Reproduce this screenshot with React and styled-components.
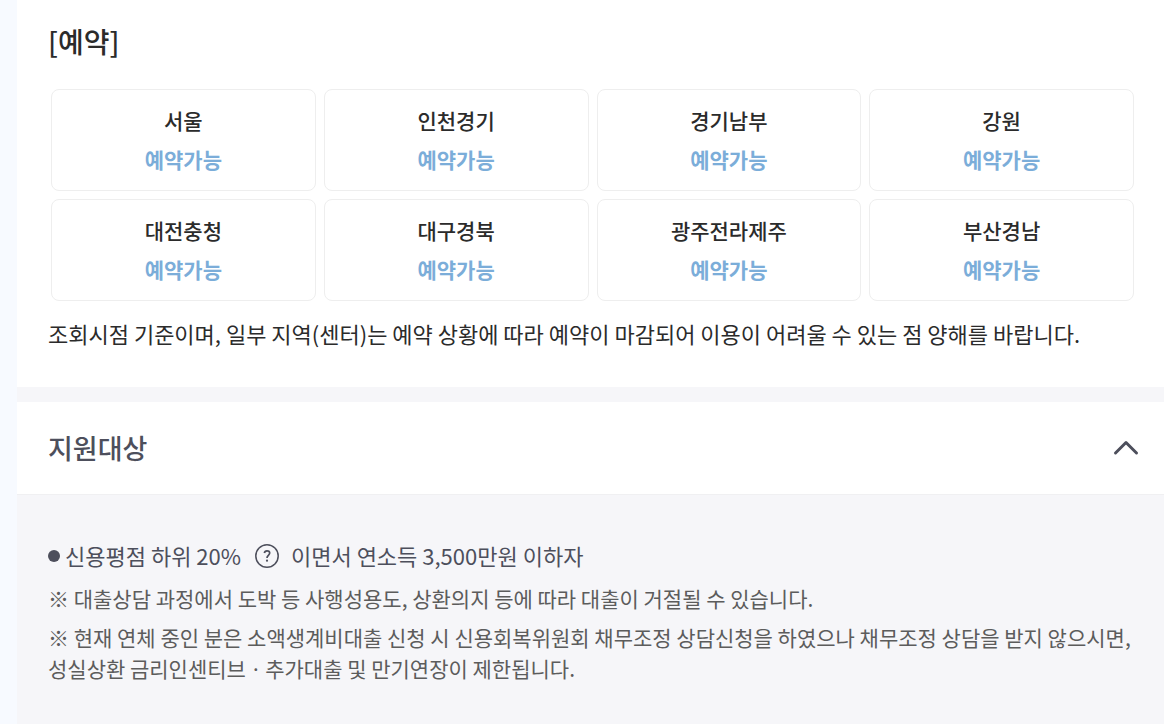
import React, { useState } from 'react';
import styled, { createGlobalStyle } from 'styled-components';

const GlobalStyle = createGlobalStyle`
  * {
    box-sizing: border-box;
  }
  body {
    margin: 0;
    background: #f7faff;
    color: #2b2b2b;
    font-family: 'Noto Sans CJK KR', 'Noto Sans', sans-serif;
    word-break: keep-all;
  }
  h2, p, ul {
    margin: 0;
    padding: 0;
  }
`;

const Page = styled.main`
  margin-left: 17px;
  min-height: 100vh;
  display: flex;
  flex-direction: column;
  background: #f6f6f9;
`;

const Reservation = styled.section`
  padding: 21px 30px 34px 31px;
  background: #fff;
`;

const Title = styled.h2`
  font-size: 28px;
  line-height: 40px;
  font-weight: 500;
`;

const Regions = styled.ul`
  display: grid;
  grid-template-columns: repeat(4, 1fr);
  gap: 8px;
  margin: 28px 0 12px 3px;
  list-style: none;
`;

const Region = styled.li`
  padding: 11px 0;
  border: 1px solid #eee;
  border-radius: 8px;
  text-align: center;
  font-size: 21px;
  line-height: 39px;
  font-weight: 500;
`;

const Status = styled.div`
  color: #7badd9;
  font-weight: 700;
`;

const Notice = styled.p`
  font-size: 22px;
  line-height: 40px;
`;

const Header = styled.section`
  margin-top: 15px;
  background: #fff;
  border-bottom: 1px solid #f0f0f2;
`;

const Toggle = styled.button`
  display: flex;
  width: 100%;
  align-items: center;
  justify-content: space-between;
  padding: 26px 25px 26px 31px;
  border: 0;
  background: none;
  color: #4d4f5c;
  font-family: inherit;
  font-size: 27px;
  line-height: 40px;
  font-weight: 500;
`;

const Body = styled.section`
  padding: 40px 30px 38px 31px;
  color: #5c5c5c;
`;

const Condition = styled.div`
  display: flex;
  align-items: center;
  color: #4d4f5c;
  font-size: 22px;
  line-height: 40px;
`;

const Bullet = styled.span`
  width: 12px;
  height: 12px;
  margin: 2px 5px 0 0;
  border-radius: 50%;
  background: #4d4f5c;
`;

const Help = styled.button`
  display: flex;
  margin: 2px 12px 0 14px;
  padding: 0;
  border: 0;
  background: none;
  color: inherit;
`;

const Note = styled.p`
  margin-top: 8px;
  font-size: 21px;
  line-height: 31px;
`;

const regions = ['서울', '인천경기', '경기남부', '강원', '대전충청', '대구경북', '광주전라제주', '부산경남'];

const App = () => {
  const [isOpen, setIsOpen] = useState(true);
  return (
    <>
      <GlobalStyle />
      <Page>
        <Reservation>
          <Title>[예약]</Title>
          <Regions>
            {regions.map((name) => (
              <Region key={name}>
                {name}
                <Status>예약가능</Status>
              </Region>
            ))}
          </Regions>
          <Notice>
            조회시점 기준이며, 일부 지역(센터)는 예약 상황에 따라 예약이 마감되어 이용이 어려울 수 있는 점 양해를 바랍니다.
          </Notice>
        </Reservation>
        <Header>
          <Toggle type="button" aria-expanded={isOpen} onClick={() => setIsOpen(!isOpen)}>
            지원대상
            <svg
              width="26"
              height="18"
              viewBox="0 0 26 18"
              fill="none"
              stroke="currentColor"
              strokeWidth="3"
              strokeLinecap="round"
              strokeLinejoin="round"
            >
              <path d="M2.5 14 13 3.5 23.5 14" />
            </svg>
          </Toggle>
        </Header>
        {isOpen && (
          <Body>
            <Condition>
              <Bullet />
              신용평점 하위 20%
              <Help type="button" aria-label="도움말">
                <svg width="24" height="24" viewBox="0 0 24 24" fill="none" stroke="currentColor">
                  <circle cx="12" cy="12" r="11.2" strokeWidth="1.5" />
                  <path d="M9.3 9c.3-1.6 1.4-2.2 2.7-2.2 1.6 0 2.7.9 2.7 2.3 0 2-2.7 2.5-2.7 4.8" strokeWidth="1.7" />
                  <circle cx="12" cy="16.7" r="1.1" fill="currentColor" stroke="none" />
                </svg>
              </Help>
              이면서 연소득 3,500만원 이하자
            </Condition>
            <Note>※ 대출상담 과정에서 도박 등 사행성용도, 상환의지 등에 따라 대출이 거절될 수 있습니다.</Note>
            <Note>
              ※ 현재 연체 중인 분은 소액생계비대출 신청 시 신용회복위원회 채무조정 상담신청을 하였으나 채무조정 상담을 받지 않으시면, 성실상환 금리인센티브ㆍ추가대출 및 만기연장이 제한됩니다.
            </Note>
          </Body>
        )}
      </Page>
    </>
  );
};

export default App;
